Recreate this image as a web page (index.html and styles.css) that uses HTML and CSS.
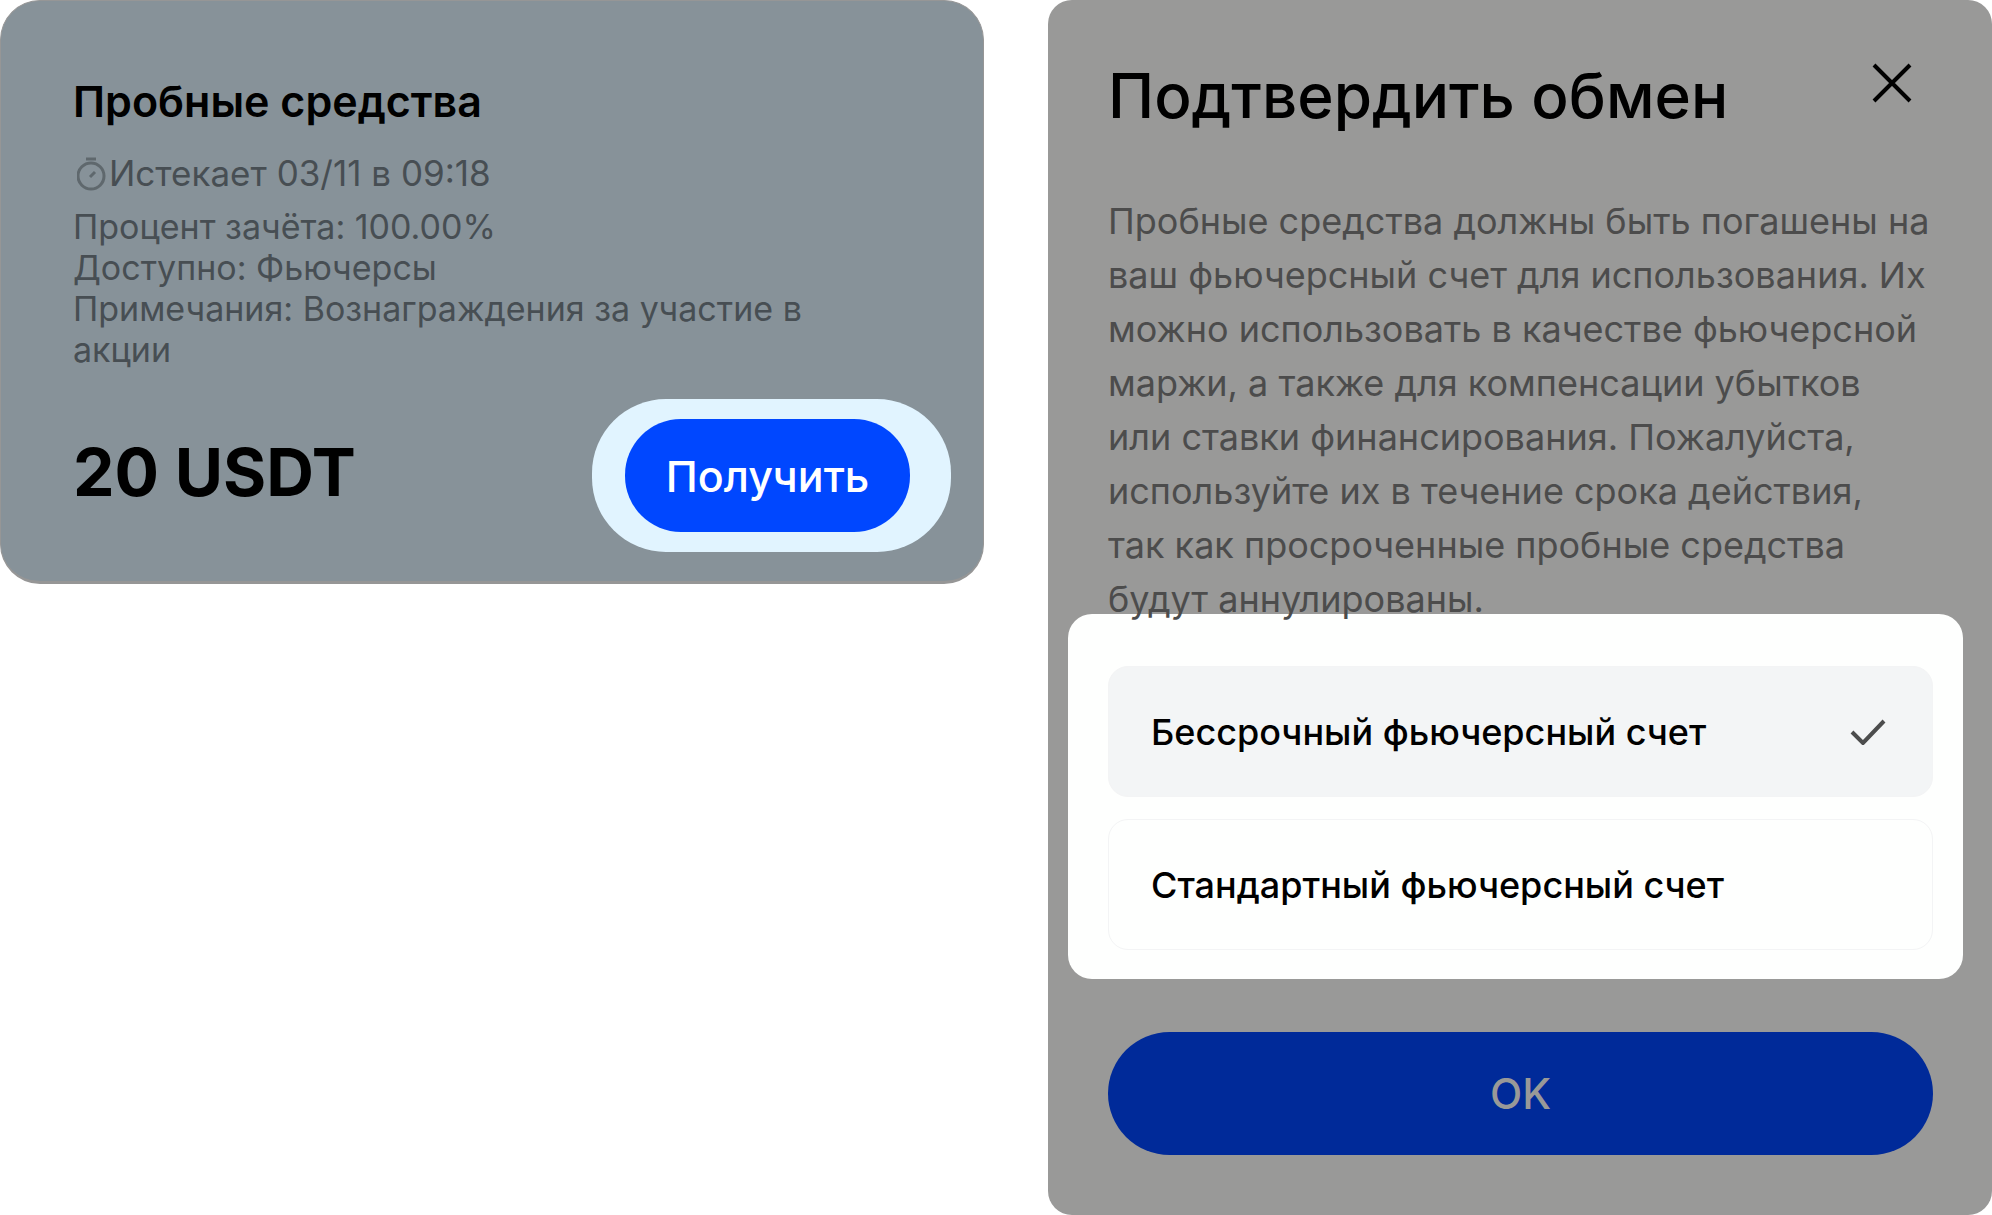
FILE: index.html
```html
<!DOCTYPE html>
<html lang="ru">
<head>
<meta charset="utf-8">
<meta name="viewport" content="width=device-width, initial-scale=1">
<title>Пробные средства</title>
<link rel="stylesheet" href="styles.css">
</head>
<body>
<main class="page">
  <section class="voucher">
    <h2 class="voucher-title">Пробные средства</h2>
    <p class="voucher-expiry">
      <svg class="timer-icon" viewBox="0 0 30 36" aria-hidden="true">
        <path d="M9 3h10"/>
        <circle cx="14" cy="20" r="13"/>
        <path d="M13 21l5-5"/>
      </svg>
      <span>Истекает 03/11 в 09:18</span>
    </p>
    <ul class="voucher-details">
      <li>Процент зачёта: 100.00%</li>
      <li>Доступно: Фьючерсы</li>
      <li>Примечания: Вознаграждения за участие в акции</li>
    </ul>
    <div class="voucher-footer">
      <strong class="voucher-amount">20 USDT</strong>
      <div class="claim-highlight">
        <button class="claim-button" type="button">Получить</button>
      </div>
    </div>
  </section>

  <form class="dialog">
    <header class="dialog-header">
      <h1 class="dialog-title">Подтвердить обмен</h1>
      <button class="close-button" type="button" aria-label="Закрыть">
        <svg class="close-icon" viewBox="0 0 40 40" aria-hidden="true"><path d="M2 2l36 36M38 2L2 38"/></svg>
      </button>
    </header>
    <p class="dialog-text">Пробные средства должны быть погашены на ваш фьючерсный счет для использования. Их можно использовать в качестве фьючерсной маржи, а также для компенсации убытков или ставки финансирования. Пожалуйста, используйте их в течение срока действия,<br>так как просроченные пробные средства<br>будут аннулированы.</p>
    <div class="accounts" role="radiogroup" aria-label="Счет">
      <label class="account">
        <input class="account-radio" type="radio" name="account" value="perpetual" checked>
        <span>Бессрочный фьючерсный счет</span>
        <svg class="check-icon" viewBox="0 0 36 26" aria-hidden="true"><path d="M2 13l11 11L34 2"/></svg>
      </label>
      <label class="account">
        <input class="account-radio" type="radio" name="account" value="standard">
        <span>Стандартный фьючерсный счет</span>
        <svg class="check-icon" viewBox="0 0 36 26" aria-hidden="true"><path d="M2 13l11 11L34 2"/></svg>
      </label>
    </div>
    <button class="ok-button" type="button">OK</button>
  </form>
</main>
</body>
</html>
```
FILE: styles.css
```css
* {
  box-sizing: border-box;
}

body {
  margin: 0;
  background: #fff;
  color: #000;
  font-family: Inter, "Liberation Sans", sans-serif;
}

h1, h2, p, ul {
  margin: 0;
  padding: 0;
}

button {
  border: 0;
  padding: 0;
  font-family: inherit;
}

.page {
  display: grid;
  grid-template-columns: 984fr 944fr;
  column-gap: 64px;
  align-items: start;
}

/* Voucher card */
.voucher {
  padding: 72px 32px 29px 72px;
  border: 1px solid #969696;
  border-bottom-width: 3px;
  border-radius: 40px;
  background: #879299;
  color: #474e53;
}

.voucher-title {
  color: #000;
  font-size: 43px;
  font-weight: 600;
  line-height: 56px;
}

.voucher-expiry {
  display: flex;
  align-items: center;
  gap: 2px;
  margin-top: 24px;
  padding-left: 4px;
  font-size: 35px;
  line-height: 41px;
}

.timer-icon {
  width: 30px;
  height: 36px;
  fill: none;
  stroke: #5f686d;
  stroke-width: 3;
}

.voucher-details {
  margin-top: 12px;
  padding-right: 140px;
  list-style: none;
  font-size: 34px;
  line-height: 41px;
}

.voucher-footer {
  display: flex;
  align-items: flex-start;
  justify-content: space-between;
  margin-top: 29px;
}

.voucher-amount {
  margin-top: 33px;
  color: #000;
  font-size: 66px;
  font-weight: 700;
  line-height: 80px;
}

.claim-highlight {
  padding: 20px 41px 20px 33px;
  border-radius: 74px;
  background: #e1f4ff;
}

.claim-button {
  display: block;
  width: 285px;
  height: 113px;
  border-radius: 56px;
  background: #0047ff;
  color: #fff;
  font-size: 43px;
  font-weight: 500;
}

/* Exchange dialog */
.dialog {
  padding: 58px 59px 60px 60px;
  border-radius: 24px;
  background: #999998;
}

.dialog-header {
  display: flex;
  align-items: flex-start;
  justify-content: space-between;
}

.dialog-title {
  font-size: 62px;
  font-weight: 500;
  line-height: 76px;
}

.close-button {
  margin: 5px 21px 0 0;
  background: none;
}

.close-icon {
  display: block;
  width: 40px;
  height: 40px;
  fill: none;
  stroke: #000;
  stroke-width: 4;
}

.dialog-text {
  position: relative;
  z-index: 1;
  margin-top: 60px;
  color: #4c4c4c;
  font-size: 36px;
  line-height: 54px;
}

.accounts {
  display: grid;
  gap: 22px;
  margin: -12px -30px 0 -40px;
  padding: 52px 30px 29px 40px;
  border-radius: 24px;
  background: #fefffe;
}

.account {
  display: flex;
  align-items: center;
  height: 131px;
  padding: 0 46px 0 42px;
  border: 1px solid #f3f4f5;
  border-radius: 20px;
  font-size: 36px;
  font-weight: 500;
}

.account:has(.account-radio:checked) {
  background: #f3f5f6;
}

.account-radio {
  appearance: none;
  width: 0;
  height: 0;
  margin: 0;
}

.check-icon {
  display: none;
  width: 36px;
  height: 26px;
  margin-left: auto;
  fill: none;
  stroke: #4c4d4d;
  stroke-width: 4;
}

.account-radio:checked ~ .check-icon {
  display: block;
}

.ok-button {
  display: block;
  width: 100%;
  height: 123px;
  margin-top: 53px;
  border-radius: 62px;
  background: #002a99;
  color: #999998;
  font-size: 42px;
  font-weight: 500;
}
```
